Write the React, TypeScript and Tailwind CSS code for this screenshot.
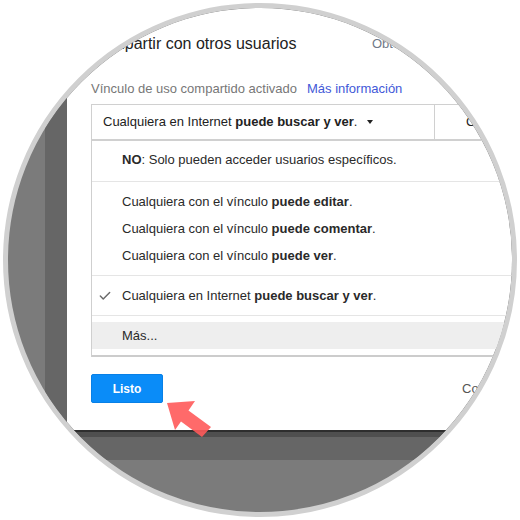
import { Check } from 'lucide-react';

const font = "font-['Liberation_Sans',Arial,sans-serif]";

const linkItems = ['editar', 'comentar', 'ver'];

const App = () => {
  return (
    <div className={`relative w-[520px] h-[520px] bg-white flex items-center justify-center ${font}`}>
      <div className="w-[514px] h-[514px] rounded-full border-[5px] border-[#d0d0d0] overflow-hidden bg-[#7b7b7b] flex">
        <div className="ml-[37px] flex-1 h-[452px] bg-[#666666] flex flex-col pl-[22px]">
          <div className="h-[422px] bg-white flex flex-col pl-[24px] pt-[26px] overflow-hidden">
            <div className="flex items-center h-[20px] whitespace-nowrap">
              <span className="w-[281px] shrink-0 text-[16px] text-[#222]">Compartir con otros usuarios</span>
              <span className="text-[13px] text-[#6f7888]">Obtener vínculo para compartir</span>
            </div>

            <div className="mt-[27px] h-[16px] flex items-center gap-[10px] text-[13px] whitespace-nowrap">
              <span className="text-[#777]">Vínculo de uso compartido activado</span>
              <span className="text-[#4259d8]">Más información</span>
            </div>

            <div className="mt-[7px] flex h-[37px] w-[460px] text-[13px] text-[#222] whitespace-nowrap">
              <div className="w-[344px] shrink-0 border border-[#d0d0d0] border-b-2 flex items-center pl-[11px]">
                <span>
                  Cualquiera en Internet <b>puede buscar y ver</b>.
                </span>
                <span className="ml-[10px] w-0 h-0 border-l-[3.5px] border-r-[3.5px] border-t-[4px] border-l-transparent border-r-transparent border-t-[#222]" />
              </div>
              <div className="w-[120px] shrink-0 border-y border-r border-[#d0d0d0] border-b-2 flex items-center pl-[31px]">
                Copiar vínculo
              </div>
            </div>

            <div className="w-[460px] border-l border-[#cfcfcf] text-[13px] text-[#2a2a2a] whitespace-nowrap flex flex-col">
              <div className="h-[40px] pt-[11px] pl-[30px] leading-[16px]">
                <b>NO</b>: Solo pueden acceder usuarios específicos.
              </div>
              <div className="h-px bg-[#e5e5e5]" />
              <div className="py-[6px] flex flex-col">
                {linkItems.map((item) => (
                  <div key={item} className="h-[27px] pl-[30px] flex items-center">
                    <span>
                      Cualquiera con el vínculo <b>puede {item}</b>.
                    </span>
                  </div>
                ))}
              </div>
              <div className="h-px bg-[#e5e5e5]" />
              <div className="h-[39px] flex items-center pl-[6px]">
                <Check className="w-[14px] h-[14px] text-[#6b6b6b] mr-[10px]" strokeWidth={2.5} />
                <span>
                  Cualquiera en Internet <b>puede buscar y ver</b>.
                </span>
              </div>
              <div className="h-px bg-[#e5e5e5]" />
              <div className="mt-[6px] h-[27px] bg-[#eeeeee] flex items-center pl-[30px]">Más...</div>
              <div className="h-[6px]" />
              <div className="h-[2px] bg-[#cccccc]" />
            </div>

            <div className="mt-[17px] flex items-center whitespace-nowrap">
              <button className="w-[72px] h-[29px] shrink-0 rounded-[2px] bg-[#0a8cf8] border border-[#0880e6] text-white text-[12px] font-bold">
                Listo
              </button>
              <span className="ml-[299px] text-[13px] text-[#555]">Configuración avanzada</span>
            </div>
          </div>
          <div className="h-[2px] bg-[#2e2e2e]" />
          <div className="h-[5px] bg-[#4f4f4f]" />
        </div>
      </div>

      <svg className="absolute left-[160px] top-[395px]" width="60" height="50" viewBox="160 395 60 50">
        <polygon
          points="167,403 195,401 188.5,410.5 211,427 202,437 181,421.5 175,430"
          fill="#ff5a5a"
          fillOpacity="0.9"
        />
      </svg>
    </div>
  );
};

export default App;
